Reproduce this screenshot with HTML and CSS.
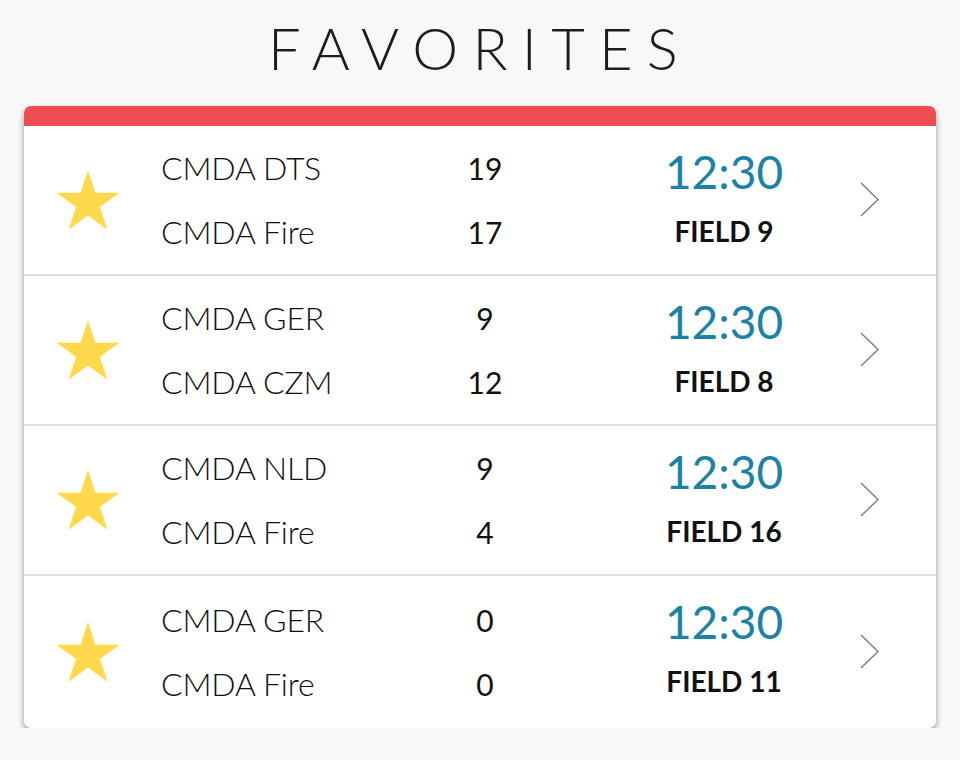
FILE: index.html
```html
<!DOCTYPE html>
<html>
<head>
<meta charset="utf-8">
<link rel="stylesheet" href="styles.css">
</head>
<body>
<h1 class="title">FAVORITES</h1>
<div class="card">
  <div class="card-top"></div>
  <div class="row">
    <div class="star"><svg width="66" height="60" viewBox="0 0 66 60"><polygon points="33,0 40.41,22.8 64.38,22.8 44.99,36.9 52.4,59.7 33,45.61 13.6,59.7 21.01,36.9 1.62,22.8 25.59,22.8"/></svg></div>
    <div class="teams"><div>CMDA DTS</div><div>CMDA Fire</div></div>
    <div class="scores"><div>19</div><div>17</div></div>
    <div class="info"><div class="time">12:30</div><div class="field">FIELD 9</div></div>
    <div class="chev"><svg width="20" height="36" viewBox="0 0 20 36"><polyline points="1,1 18,17.5 1,34"/></svg></div>
  </div>
  <div class="row">
    <div class="star"><svg width="66" height="60" viewBox="0 0 66 60"><polygon points="33,0 40.41,22.8 64.38,22.8 44.99,36.9 52.4,59.7 33,45.61 13.6,59.7 21.01,36.9 1.62,22.8 25.59,22.8"/></svg></div>
    <div class="teams"><div>CMDA GER</div><div>CMDA CZM</div></div>
    <div class="scores"><div>9</div><div>12</div></div>
    <div class="info"><div class="time">12:30</div><div class="field">FIELD 8</div></div>
    <div class="chev"><svg width="20" height="36" viewBox="0 0 20 36"><polyline points="1,1 18,17.5 1,34"/></svg></div>
  </div>
  <div class="row">
    <div class="star"><svg width="66" height="60" viewBox="0 0 66 60"><polygon points="33,0 40.41,22.8 64.38,22.8 44.99,36.9 52.4,59.7 33,45.61 13.6,59.7 21.01,36.9 1.62,22.8 25.59,22.8"/></svg></div>
    <div class="teams"><div>CMDA NLD</div><div>CMDA Fire</div></div>
    <div class="scores"><div>9</div><div>4</div></div>
    <div class="info"><div class="time">12:30</div><div class="field">FIELD 16</div></div>
    <div class="chev"><svg width="20" height="36" viewBox="0 0 20 36"><polyline points="1,1 18,17.5 1,34"/></svg></div>
  </div>
  <div class="row last">
    <div class="star"><svg width="66" height="60" viewBox="0 0 66 60"><polygon points="33,0 40.41,22.8 64.38,22.8 44.99,36.9 52.4,59.7 33,45.61 13.6,59.7 21.01,36.9 1.62,22.8 25.59,22.8"/></svg></div>
    <div class="teams"><div>CMDA GER</div><div>CMDA Fire</div></div>
    <div class="scores"><div>0</div><div>0</div></div>
    <div class="info"><div class="time">12:30</div><div class="field">FIELD 11</div></div>
    <div class="chev"><svg width="20" height="36" viewBox="0 0 20 36"><polyline points="1,1 18,17.5 1,34"/></svg></div>
  </div>
</div>
</body>
</html>
```
FILE: styles.css
```css
html, body {
  margin: 0;
  padding: 0;
  background: #f8f8f8;
  font-family: Lato, "Open Sans", sans-serif;
  color: #111;
}
.title {
  margin: 8px 0 18px;
  height: 80px;
  line-height: 80px;
  font-size: 58px;
  font-weight: 300;
  text-align: center;
  letter-spacing: 0.245em;
  color: #1c1c1c;
}
.card {
  margin: 0 24px;
  background: #fff;
  border-radius: 7px;
  overflow: hidden;
  box-shadow: 0 4px 6px rgba(0, 0, 0, 0.4);
}
.card-top {
  height: 20px;
  background: #f04d53;
}
.row {
  height: 148px;
  border-bottom: 2px solid #dedede;
  display: grid;
  grid-template-columns: 137px 269px 110px 80px 208px 1fr;
  align-items: center;
}
.row.last {
  border-bottom: none;
  height: 152px;
}
.star {
  padding-left: 31px;
  display: flex;
  align-items: center;
}
.star svg polygon {
  fill: #ffd94b;
}
.teams {
  font-size: 32px;
  font-weight: 300;
  line-height: 64px;
  color: #111;
  letter-spacing: -0.2px;
}
.scores {
  font-size: 30px;
  font-weight: 400;
  line-height: 64px;
  text-align: center;
}
.info {
  grid-column: 5;
  text-align: center;
  align-self: start;
  padding-top: 18px;
}
.time {
  font-size: 46px;
  line-height: 56px;
  color: #1a82a7;
  font-weight: 400;
}
.field {
  font-size: 28px;
  font-weight: 700;
  line-height: 62px;
  margin-top: 0;
}
.chev {
  padding-left: 32px;
  display: flex;
  align-items: center;
}
.chev svg polyline {
  fill: none;
  stroke: #7a7a86;
  stroke-width: 1.4;
}
```
